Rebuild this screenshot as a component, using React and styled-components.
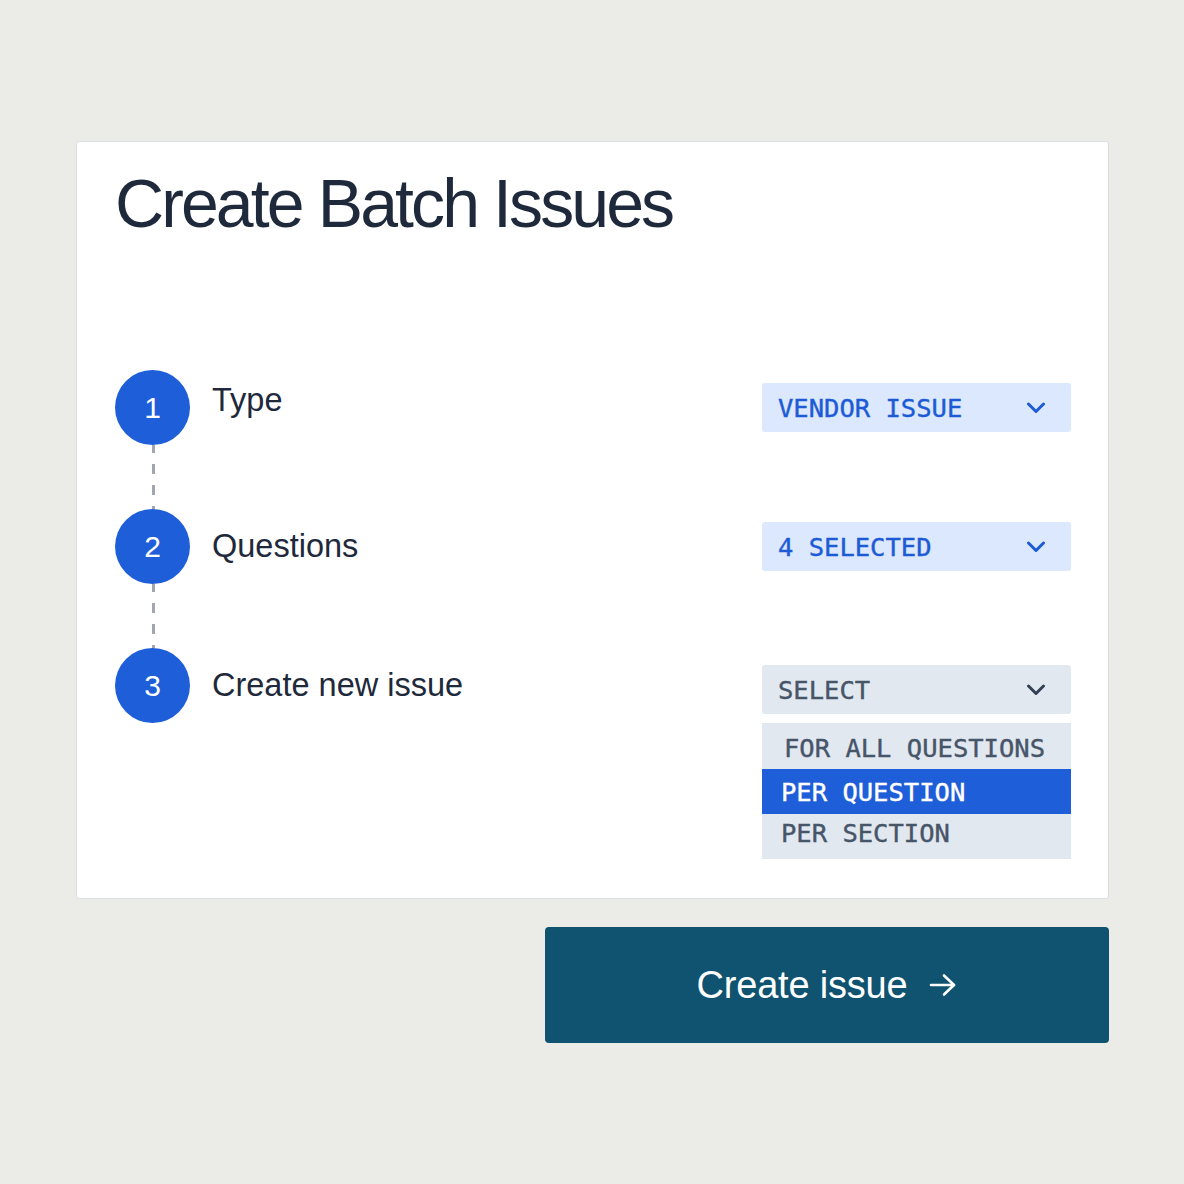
import React from 'react';
import styled, { createGlobalStyle } from 'styled-components';

const GlobalStyle = createGlobalStyle`
  html, body {
    margin: 0;
    padding: 0;
    background: #ebebe7;
  }
  body {
    font-family: 'Liberation Sans', Arial, sans-serif;
  }
`;

const steps = [
  { n: 1, label: 'Type', value: 'VENDOR ISSUE', tone: 'blue', lift: 7 },
  { n: 2, label: 'Questions', value: '4 SELECTED', tone: 'blue' },
  {
    n: 3,
    label: 'Create new issue',
    value: 'SELECT',
    tone: 'gray',
    drop: 4,
    options: ['FOR ALL QUESTIONS', 'PER QUESTION', 'PER SECTION'],
    active: 1,
  },
];

const Chevron = () => (
  <svg width="20" height="12" viewBox="0 0 20 12" fill="none">
    <polyline
      points="2.5,2 10,9.5 17.5,2"
      stroke="currentColor"
      strokeWidth="3"
      strokeLinecap="round"
      strokeLinejoin="round"
    />
  </svg>
);

const Arrow = () => (
  <svg width="28" height="24" viewBox="0 0 28 24" fill="none">
    <line x1="2" y1="12" x2="25" y2="12" stroke="currentColor" strokeWidth="2.6" strokeLinecap="round" />
    <polyline
      points="15,2.5 25,12 15,21.5"
      stroke="currentColor"
      strokeWidth="2.6"
      strokeLinecap="round"
      strokeLinejoin="round"
    />
  </svg>
);

const App = () => {
  return (
    <Page>
      <GlobalStyle />
      <Card>
        <Title>Create Batch Issues</Title>
        <Steps>
          {steps.map((s, i) => (
            <Step key={s.n}>
              <Marker>
                <Circle>{s.n}</Circle>
                {i < steps.length - 1 && <Connector />}
              </Marker>
              <Label $lift={s.lift}>{s.label}</Label>
              <Control $drop={s.drop}>
                <Select $tone={s.tone}>
                  <span>{s.value}</span>
                  <Chevron />
                </Select>
                {s.options && (
                  <Menu>
                    {s.options.map((o, j) => (
                      <Option key={o} $active={j === s.active} $first={j === 0} $last={j === s.options.length - 1}>
                        {o}
                      </Option>
                    ))}
                  </Menu>
                )}
              </Control>
            </Step>
          ))}
        </Steps>
      </Card>
      <Button>
        <span>Create issue</span>
        <Arrow />
      </Button>
    </Page>
  );
};

export default App;

const Page = styled.div`
  width: 1184px;
  height: 1184px;
  box-sizing: border-box;
  padding: 141px 75px 0 76px;
  display: flex;
  flex-direction: column;
`;

const Card = styled.div`
  background: #ffffff;
  border: 1px solid #d9dee5;
  border-radius: 3px;
  padding: 27px 37px 39px 38px;
  display: flex;
  flex-direction: column;
`;

const Title = styled.h1`
  margin: 0;
  font-family: 'Liberation Sans', Arial, sans-serif;
  font-weight: 400;
  font-size: 68px;
  line-height: 68px;
  letter-spacing: -2.9px;
  color: #1e293b;
`;

const Steps = styled.div`
  margin-top: 133px;
  display: flex;
  flex-direction: column;
`;

const Step = styled.div`
  display: flex;
  align-items: flex-start;
`;

const Marker = styled.div`
  width: 75px;
  display: flex;
  flex-direction: column;
  align-items: center;
`;

const Circle = styled.div`
  width: 75px;
  height: 75px;
  border-radius: 50%;
  background: #1f5ed9;
  color: #ffffff;
  display: flex;
  align-items: center;
  justify-content: center;
  font-size: 30px;
  line-height: 1;
`;

const Connector = styled.div`
  width: 3px;
  height: 64px;
  margin-left: 1px;
  background: repeating-linear-gradient(
    to bottom,
    #a1a7b0 0,
    #a1a7b0 10px,
    transparent 10px,
    transparent 21px
  );
  background-position: 0 -2px;
`;

const Label = styled.div`
  flex: 1;
  margin-left: 22px;
  height: 75px;
  display: flex;
  align-items: center;
  font-size: 32.5px;
  color: #1e293b;
  transform: translateY(${(p) => -(p.$lift || 0)}px);
`;

const Control = styled.div`
  width: 309px;
  margin-top: ${(p) => 13 + (p.$drop || 0)}px;
  display: flex;
  flex-direction: column;
  gap: 9px;
`;

const Select = styled.div`
  height: 49px;
  box-sizing: border-box;
  border-radius: 3px;
  padding: 0 25px 0 16px;
  display: flex;
  align-items: center;
  justify-content: space-between;
  font-family: 'DejaVu Sans Mono', 'Liberation Mono', monospace;
  font-size: 25.5px;
  -webkit-text-stroke: 0.4px currentColor;
  background: ${(p) => (p.$tone === 'gray' ? '#e2e8f0' : '#dbe8fd')};
  color: ${(p) => (p.$tone === 'gray' ? '#475569' : '#1d5bd6')};

  svg {
    color: ${(p) => (p.$tone === 'gray' ? '#334155' : '#1d5bd6')};
  }
`;

const Menu = styled.div`
  background: #e2e8f0;
  padding: 1px 0 0;
  display: flex;
  flex-direction: column;
`;

const Option = styled.div`
  height: 45px;
  box-sizing: border-box;
  display: flex;
  align-items: center;
  padding-left: ${(p) => (p.$first ? 22 : 19)}px;
  padding-top: ${(p) => (p.$first ? 3 : 0)}px;
  padding-bottom: ${(p) => (p.$last ? 8 : 0)}px;
  font-family: 'DejaVu Sans Mono', 'Liberation Mono', monospace;
  font-size: 25.5px;
  -webkit-text-stroke: 0.4px currentColor;
  background: ${(p) => (p.$active ? '#1f5ed9' : 'transparent')};
  color: ${(p) => (p.$active ? '#ffffff' : '#475569')};
`;

const Button = styled.button`
  align-self: flex-end;
  margin-top: 28px;
  width: 564px;
  height: 116px;
  border: none;
  border-radius: 4px;
  background: #0f5370;
  color: #ffffff;
  display: flex;
  align-items: center;
  justify-content: center;
  gap: 22px;
  font-family: 'Liberation Sans', Arial, sans-serif;
  font-size: 38px;
  letter-spacing: -0.2px;
  cursor: pointer;
`;
